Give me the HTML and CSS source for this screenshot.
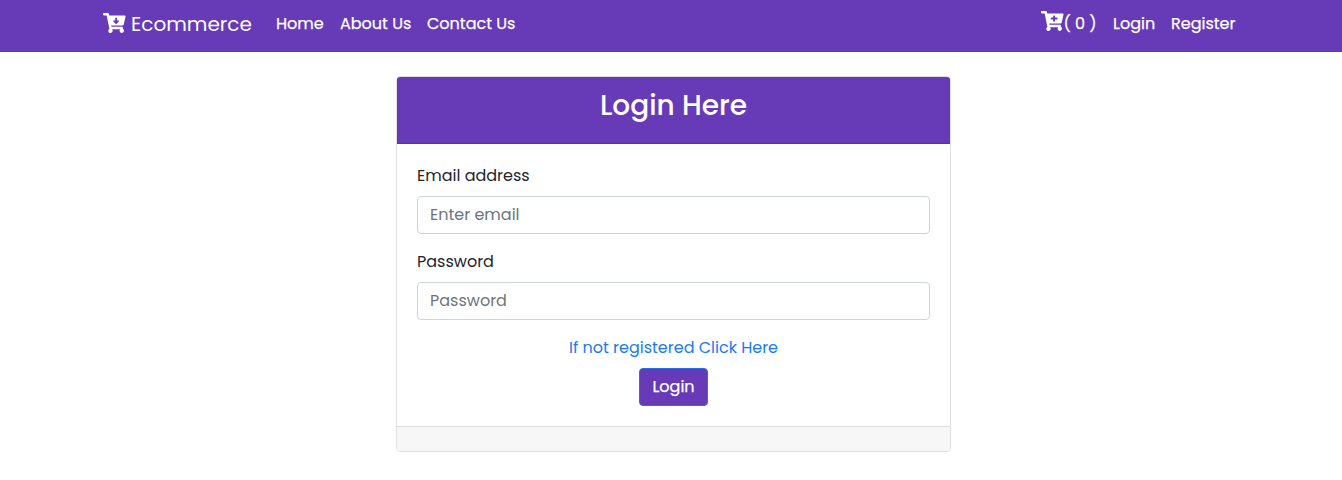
FILE: index.html
```html
<!DOCTYPE html>
<html lang="en">
<head>
<meta charset="utf-8">
<title>Ecommerce - Login</title>
<link rel="stylesheet" href="styles.css">
</head>
<body>
<nav class="navbar">
  <a class="brand" href="#">
    <svg class="cart" viewBox="0 0 576 512"><path d="M504.717 320H211.572l6.545 32h268.418c15.401 0 26.816 14.301 23.403 29.319l-5.517 24.276C523.112 414.668 536 433.828 536 456c0 31.202-25.519 56.444-56.824 55.994-29.823-.429-54.35-24.631-55.155-54.447-.44-16.287 6.085-31.049 16.803-41.548H231.176C241.553 426.165 248 440.326 248 456c0 31.813-26.528 57.431-58.67 55.938-28.54-1.325-51.751-24.385-53.251-52.917-1.158-22.034 10.436-41.455 28.051-51.586L93.883 64H24C10.745 64 0 53.255 0 40V24C0 10.745 10.745 0 24 0h102.529c11.401 0 21.228 8.021 23.513 19.19L159.208 64H551.99c15.401 0 26.816 14.301 23.403 29.319l-47.273 208C525.637 312.246 515.923 320 504.717 320zM403.029 192H360v-60c0-6.627-5.373-12-12-12h-24c-6.627 0-12 5.373-12 12v60h-43.029c-10.691 0-16.045 12.926-8.485 20.485l67.029 67.029c4.686 4.686 12.284 4.686 16.971 0l67.029-67.029c7.559-7.559 2.205-20.485-8.486-20.485z"/></svg>
    <span class="brand-name">Ecommerce</span>
  </a>
  <div class="links">
    <a class="link home" href="#">Home</a>
    <a class="link about" href="#">About Us</a>
    <a class="link contact" href="#">Contact Us</a>
  </div>
  <div class="links account">
    <a class="link basket" href="#"><svg class="cart" viewBox="0 0 576 512"><path d="M504.717 320H211.572l6.545 32h268.418c15.401 0 26.816 14.301 23.403 29.319l-5.517 24.276C523.112 414.668 536 433.828 536 456c0 31.202-25.519 56.444-56.824 55.994-29.823-.429-54.35-24.631-55.155-54.447-.44-16.287 6.085-31.049 16.803-41.548H231.176C241.553 426.165 248 440.326 248 456c0 31.813-26.528 57.431-58.67 55.938-28.54-1.325-51.751-24.385-53.251-52.917-1.158-22.034 10.436-41.455 28.051-51.586L93.883 64H24C10.745 64 0 53.255 0 40V24C0 10.745 10.745 0 24 0h102.529c11.401 0 21.228 8.021 23.513 19.19L159.208 64H551.99c15.401 0 26.816 14.301 23.403 29.319l-47.273 208C525.637 312.246 515.923 320 504.717 320zM408 168h-48v-40c0-8.837-7.163-16-16-16h-16c-8.837 0-16 7.163-16 16v40h-48c-8.837 0-16 7.163-16 16v16c0 8.837 7.163 16 16 16h48v40c0 8.837 7.163 16 16 16h16c8.837 0 16-7.163 16-16v-40h48c8.837 0 16-7.163 16-16v-16c0-8.837-7.163-16-16-16z"/></svg><span class="count">( 0 )</span></a>
    <a class="link login" href="#">Login</a>
    <a class="link register" href="#">Register</a>
  </div>
</nav>
<main class="card">
  <header class="card-header"><h1 class="title">Login Here</h1></header>
  <form class="card-body">
    <label class="label label-email" for="email">Email address</label>
    <input class="field field-email" id="email" type="email" placeholder="Enter email">
    <label class="label label-password" for="password">Password</label>
    <input class="field field-password" id="password" type="password" placeholder="Password">
    <a class="signup" href="#">If not registered Click Here</a>
    <button class="submit" type="button">Login</button>
  </form>
  <footer class="card-footer"></footer>
</main>
</body>
</html>
```

FILE: styles.css
```css
* { box-sizing: border-box; }
body {
  margin: 0;
  background: #fff;
  color: #212529;
  font: 400 16px/24px Poppins, Inter, "Open Sans", sans-serif;
}
a { text-decoration: none; }
.navbar {
  display: flex;
  height: 52px;
  padding: 0 106px 0 103px;
  background: #673ab7;
  color: #fff;
}
.brand { display: flex; width: 173px; padding-top: 9px; color: #fff; }
.cart { display: block; flex: none; width: 22.5px; height: 20px; fill: #fff; }
.brand .cart { margin-top: 4px; }
.brand-name { margin-left: 5.5px; font-size: 20px; line-height: 30px; }
.links { display: flex; gap: 16px; padding-top: 12px; }
.link { display: block; color: #fff; white-space: nowrap; }
.link, .submit { -webkit-text-stroke: .25px #fff; }
.home { width: 48px; }
.about { width: 71px; }
.contact { width: 89px; }
.account { margin-left: auto; }
.basket { display: flex; width: 56px; }
.basket .cart { margin-top: -1px; }
.login { width: 42px; }
.register { width: 65px; }
.card {
  width: 555px;
  margin: 24px 0 0 396px;
  border: 1px solid #dfdfdf;
  border-radius: 4px;
  overflow: hidden;
}
.card-header {
  height: 67px;
  padding-top: 12px;
  background: #673ab7;
  border-bottom: 1px solid #5a33a0;
  color: #fff;
  text-align: center;
}
.title { margin: 0; font-size: 28px; line-height: 34px; font-weight: 500; }
.card-body { display: flex; flex-direction: column; height: 282px; padding: 20px 20px 0; }
.label { height: 24px; margin-bottom: 8px; }
.field {
  width: 100%;
  height: 38px;
  margin: 0 0 16px;
  padding: 5px 12px 7px;
  border: 1px solid #ced4da;
  border-radius: 4px;
  background: #fff;
  font: inherit;
}
.field::placeholder { color: #6c757d; opacity: 1; }
.signup { align-self: center; margin-bottom: 8px; color: #1a7bf0; white-space: nowrap; }
.submit {
  align-self: center;
  width: 69px;
  height: 38px;
  padding: 0;
  border: 1px solid #2470e8;
  border-radius: 4px;
  background: #673ab7;
  color: #fff;
  font: inherit;
}
.card-footer { height: 25px; background: #f7f7f7; border-top: 1px solid #dfdfdf; }
```
